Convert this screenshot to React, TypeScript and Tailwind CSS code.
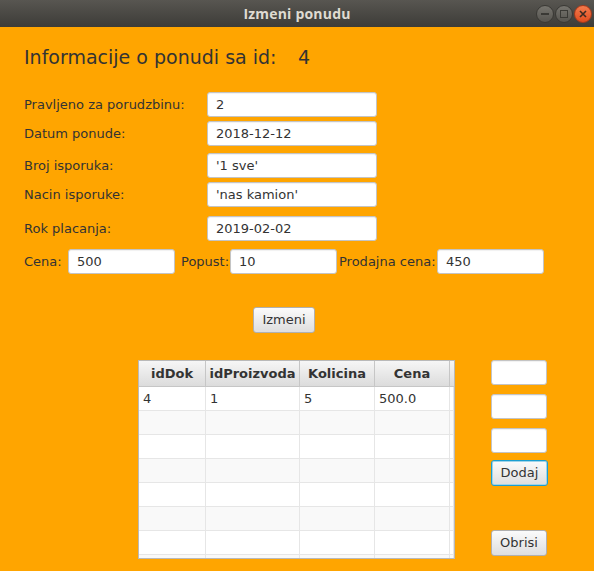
import React from "react";

const font = { fontFamily: "'DejaVu Sans', Verdana, sans-serif" };

function Field({ value, className }: { value?: string; className: string }) {
    return (
        <div className={"h-[25px] bg-white border border-[#c4c4c4] rounded-[3px] flex items-center pl-[8px] text-[13px] text-[#333] shadow-[inset_0_1px_1px_rgba(0,0,0,0.06)] " + className}>
            {value}
        </div>
    );
}

function Btn({ label, className }: { label: string; className: string }) {
    return (
        <div className={"h-[26px] rounded-[3px] bg-gradient-to-b from-[#fbfbfb] to-[#dedede] flex items-center justify-center text-[13px] text-[#333] " + className}>
            {label}
        </div>
    );
}

function Row({ label, value, className }: { label: string; value: string; className: string }) {
    return (
        <div className={"flex items-center " + className}>
            <span className="w-[183px] text-[13px] text-[#333]">{label}</span>
            <Field value={value} className="w-[170px]" />
        </div>
    );
}

const cols = [
    { name: "idDok", w: "w-[67px]" },
    { name: "idProizvoda", w: "w-[94px]" },
    { name: "Kolicina", w: "w-[75px]" },
    { name: "Cena", w: "w-[75px]" },
];

const rows = [["4", "1", "5", "500.0"], [], [], [], [], [], [], []];

export default function App() {
    return (
        <div className="w-[594px] h-[571px] overflow-hidden" style={font}>
            {/* title bar */}
            <div className="h-[27px] bg-gradient-to-b from-[#585651] to-[#3d3c38] grid grid-cols-[1fr_auto_1fr] items-center">
                <div />
                <span className="text-[14px] font-bold text-[#dfdbd2] tracking-[0.2px]" style={{ fontFamily: "'Open Sans', sans-serif" }}>Izmeni ponudu</span>
                <div className="flex justify-end items-center gap-[1px] pr-[2px] pt-[1px]">
                    <div className="w-[18px] h-[18px] rounded-full bg-gradient-to-b from-[#77756f] to-[#56544f] border border-[#3a3935] flex items-center justify-center">
                        <div className="w-[8px] h-[2px] bg-[#3a3935]" />
                    </div>
                    <div className="w-[18px] h-[18px] rounded-full bg-gradient-to-b from-[#77756f] to-[#56544f] border border-[#3a3935] flex items-center justify-center">
                        <div className="w-[8px] h-[8px] border-[1.5px] border-[#3a3935]" />
                    </div>
                    <div className="w-[18px] h-[18px] rounded-full bg-gradient-to-b from-[#f27a4c] to-[#df4b1c] border border-[#a8391a] flex items-center justify-center">
                        <svg width="8" height="8" viewBox="0 0 8 8"><path d="M1 1L7 7M7 1L1 7" stroke="#3a2a22" strokeWidth="1.6" /></svg>
                    </div>
                </div>
            </div>

            {/* body */}
            <div className="h-[544px] bg-[#ffa500] pl-[24px] pt-[18px]">
                <div className="flex items-center h-[24px] text-[19px] text-[#333]">
                    <span className="w-[274px]">Informacije o ponudi sa id:</span>
                    <span>4</span>
                </div>

                <Row label="Pravljeno za porudzbinu:" value="2" className="mt-[23px]" />
                <Row label="Datum ponude:" value="2018-12-12" className="mt-[4px]" />
                <Row label="Broj isporuka:" value="'1 sve'" className="mt-[7px]" />
                <Row label="Nacin isporuke:" value="'nas kamion'" className="mt-[4px]" />
                <Row label="Rok placanja:" value="2019-02-02" className="mt-[9px]" />

                <div className="flex items-center mt-[8px] text-[13px] text-[#333]">
                    <span className="w-[44px]">Cena:</span>
                    <Field value="500" className="w-[107px]" />
                    <span className="w-[49px] ml-[6px]">Popust:</span>
                    <Field value="10" className="w-[107px]" />
                    <span className="w-[98px] ml-[2px]">Prodajna cena:</span>
                    <Field value="450" className="w-[107px]" />
                </div>

                <Btn label="Izmeni" className="w-[62px] ml-[229px] mt-[33px] border border-[#b0b0b0]" />

                <div className="flex mt-[27px]">
                    {/* table */}
                    <div className="ml-[114px] w-[317px] h-[199px] border border-[#b9b9b9] bg-white overflow-hidden">
                        <div className="flex h-[26px] bg-gradient-to-b from-[#f6f6f6] to-[#dcdcdc] border-b border-[#c6c6c6]">
                            {cols.map((c) => (
                                <div key={c.name} className={"flex items-center justify-center text-[13px] font-bold text-[#333] border-r border-[#c6c6c6] " + c.w}>{c.name}</div>
                            ))}
                            <div className="flex-1" />
                        </div>
                        {rows.map((r, i) => (
                            <div key={i} className={"flex h-[24px] border-b border-[#e6e6e6] " + (i % 2 === 1 ? "bg-[#f9f9f9]" : "bg-white")}>
                                {cols.map((c, j) => (
                                    <div key={c.name} className={"flex items-center pl-[4px] text-[13px] text-[#333] border-r border-[#e6e6e6] " + c.w}>{r[j]}</div>
                                ))}
                                <div className="flex-1 border-r border-[#e6e6e6]" />
                            </div>
                        ))}
                    </div>

                    {/* right column */}
                    <div className="ml-[36px] w-[57px] flex flex-col">
                        <Field className="w-[56px]" />
                        <Field className="w-[56px] mt-[9px]" />
                        <Field className="w-[56px] mt-[9px]" />
                        <Btn label="Dodaj" className="w-[57px] mt-[7px] border border-[#1c9ed1] shadow-[inset_0_0_0_1px_#9fd4ea]" />
                        <Btn label="Obrisi" className="w-[56px] mt-[44px] border border-[#b0b0b0]" />
                    </div>
                </div>
            </div>
        </div>
    );
}
